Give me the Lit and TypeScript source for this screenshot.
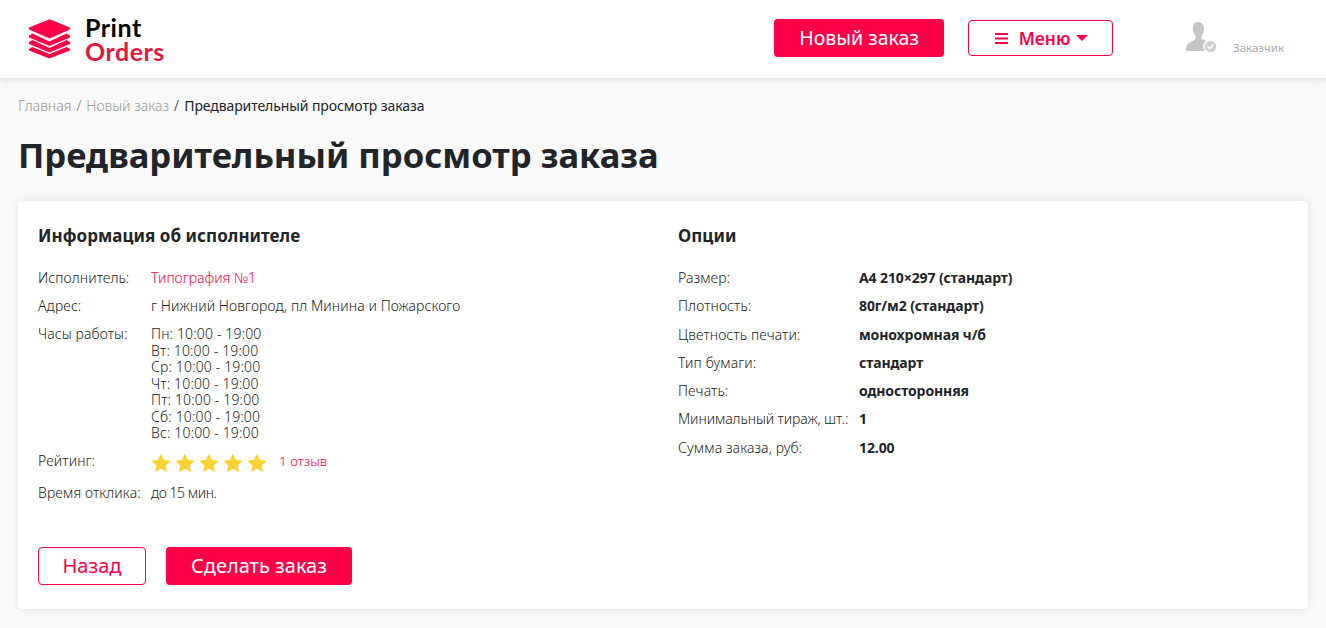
import { LitElement, html, css, svg } from "lit";
import { customElement } from "lit/decorators.js";

const hours = ["Пн: 10:00 - 19:00","Вт: 10:00 - 19:00","Ср: 10:00 - 19:00","Чт: 10:00 - 19:00","Пт: 10:00 - 19:00","Сб: 10:00 - 19:00","Вс: 10:00 - 19:00"];
const options = [["Размер:","А4 210×297 (стандарт)"],["Плотность:","80г/м2 (стандарт)"],["Цветность печати:","монохромная ч/б"],["Тип бумаги:","стандарт"],["Печать:","односторонняя"],["Минимальный тираж, шт.:","1"],["Сумма заказа, руб:","12.00"]];
const star = svg`<svg class="star" viewBox="0 0 20 20" width="20" height="20"><path d="M10 .6l2.9 6.3 6.8.8-5 4.7 1.3 6.8-6-3.4-6 3.4 1.3-6.8-5-4.7 6.8-.8z"/></svg>`;

@customElement("app-root")
export class AppRoot extends LitElement {
  static styles = css`
    :host { display: block; height: 628px; overflow: hidden; background: #f9f9f9; color: #212529; font-family: "Noto Sans", "Open Sans", sans-serif; font-size: 14px; }
    * { box-sizing: border-box; }
    header { height: 78px; background: #fff; box-shadow: 0 1px 8px rgba(0,0,0,.14); display: flex; align-items: center; padding: 0 42px 0 29px; position: relative; }
    .logo { display: flex; align-items: center; gap: 14px; }
    .logo svg { display: block; }
    .brand { font-family: Lato, sans-serif; font-size: 25px; font-weight: 700; line-height: 24px; color: #000; letter-spacing: .5px; }
    .brand div + div { color: #e3173e; }
    .spacer { flex: 1; }
    .btn { display: flex; align-items: center; justify-content: center; border-radius: 4px; font-family: "Noto Sans", sans-serif; }
    .solid { background: #ff0048; color: #fff; }
    .outline { background: #fff; color: #ff0048; border: 1px solid #ff0048; }
    .new { width: 170px; height: 38px; font-size: 19.5px; margin: -2px 24px 0 0; padding-bottom: 2px; }
    .menu { width: 145px; height: 36px; font-size: 17.4px; font-weight: 600; gap: 6px; margin: -2px 73px 0 0; padding-left: 2px; }
    .menu .bars { margin-right: 5px; }
    .caret { width: 0; height: 0; border: 6px solid transparent; border-top-color: #ff0048; border-bottom: 0; }
    .user { display: flex; gap: 15px; align-items: flex-end; height: 36px; margin-top: -4px; }
    .user svg { margin-bottom: 2px; }
    .user span { font-size: 11.5px; color: #a9a9b2; line-height: 14px; }
    main { padding: 18px 18px 0; }
    .crumbs { font-size: 14px; line-height: 20px; color: #212529; height: 20px; letter-spacing: -.1px; }
    .crumbs a { color: #999; font-weight: 300; letter-spacing: .02px; }
    .crumbs i { font-style: normal; font-weight: 300; color: #777; margin: 0 1.5px; }
    .crumbs i.dark { color: #212529; margin-right: 2px; }
    h1 { margin: 18px 0 25px; font-size: 34.57px; line-height: 42px; font-weight: 700; color: #212529; }
    .card { height: 408px; background: #fff; border-radius: 4px; box-shadow: 0 0 8px rgba(0,0,0,.1); padding: 24px 20px; display: flex; flex-direction: column; }
    .cols { display: grid; grid-template-columns: 640px 1fr; flex: 1; }
    h2 { margin: 0 0 21px; font-size: 17px; line-height: 22px; font-weight: 700; color: #212529; letter-spacing: .05px; }
    .rows { display: flex; flex-direction: column; gap: 8px; font-size: 14px; line-height: 20px; letter-spacing: .09px; font-weight: 300; color: #222; }
    .row { display: grid; grid-template-columns: 113px 1fr; }
    .opts .row { grid-template-columns: 181px 1fr; }
    .opts { gap: 8.3px; }
    .opts b { font-weight: 700; letter-spacing: -.1px; color: #212529; }
    .opts .lab { letter-spacing: .1px; }
    .opts .row.long .lab { letter-spacing: -.09px; }
    .red { color: #ff0048; letter-spacing: 0; }
    .hrs div { line-height: 16.5px; letter-spacing: .15px; }
    .hrs { padding-top: 2px; }
    .tight { letter-spacing: -.45px; }
    .row.rating { margin-top: 1px; }
    .rate { display: flex; align-items: center; height: 24px; }
    .star { fill: #fdd12f; display: block; margin-right: 4px; flex: none; }
    .rate span { margin: 0 0 4px 8px; font-size: 13.5px; }
    .actions { display: flex; gap: 20px; }
    .actions .btn { height: 38px; font-size: 20px; padding-bottom: 2px; }
    .back { width: 108px; }
    .go { width: 186px; }
  `;

  render() {
    return html`
      <header>
        <div class="logo">
          <svg width="42" height="40" viewBox="0 0 42 40" fill="#ff0048">
            <path d="M20.500 .3L41 8.500V10.500L20.500 19.500L0 10.500V8.500Z"/>
            <path d="M0 16.500L3.500 14.500L20.500 22.500L37.500 14.500L41 16.500V18.500L20.500 27L0 18.500Z"/>
            <path d="M0 23L3.500 21L20.500 29L37.500 21L41 23V25L20.500 33.500L0 25Z"/>
            <path d="M0 30L3.500 28L20.500 35L37.500 28L41 30V31.500L20.500 39.500L0 31.500Z"/>
          </svg>
          <div class="brand"><div>Print</div><div>Orders</div></div>
        </div>
        <div class="spacer"></div>
        <div class="btn solid new">Новый заказ</div>
        <div class="btn outline menu">
          <svg class="bars" width="13" height="11" viewBox="0 0 13 11" fill="#ff0048"><rect width="13" height="2"/><rect y="4.500" width="13" height="2"/><rect y="9" width="13" height="2"/></svg>
          Меню
          <span class="caret"></span>
        </div>
        <div class="user">
          <svg width="32" height="32" viewBox="0 0 32 32">
            <path fill="#c5c5c5" d="M12 1c4 0 6 3 6 7 0 3-1 5-2.500 7v3c3 1 6 2 8 3.500l-2 8.500H0c-.5-4 1-7 3-8 2.500-1.500 5-2.500 6.500-4v-3C8 13 7 11 7 8c0-4 1-7 5-7z"/>
            <circle cx="24.500" cy="25.500" r="6.500" fill="#d0d0d0" stroke="#fff" stroke-width="1.500"/>
            <path d="M21.500 25.500l2.200 2.200 3.800-4.400" fill="none" stroke="#fff" stroke-width="1.600"/>
          </svg>
          <span>Заказчик</span>
        </div>
      </header>
      <main>
        <div class="crumbs"><a>Главная</a> <i>/</i> <a>Новый заказ</a> <i class="dark">/</i> Предварительный просмотр заказа</div>
        <h1>Предварительный просмотр заказа</h1>
        <div class="card">
          <div class="cols">
            <section>
              <h2>Информация об исполнителе</h2>
              <div class="rows">
                <div class="row"><div class="lab">Исполнитель:</div><div class="red">Типография №1</div></div>
                <div class="row"><div class="lab">Адрес:</div><div>г Нижний Новгород, пл Минина и Пожарского</div></div>
                <div class="row"><div class="lab">Часы работы:</div><div class="hrs">${hours.map((h) => html`<div>${h}</div>`)}</div></div>
                <div class="row rating"><div class="lab">Рейтинг:</div><div class="rate">${star}${star}${star}${star}${star}<span class="red">1 отзыв</span></div></div>
                <div class="row"><div class="lab">Время отклика:</div><div class="tight">до 15 мин.</div></div>
              </div>
            </section>
            <section>
              <h2>Опции</h2>
              <div class="rows opts">
                ${options.map(([a, b], i) => html`<div class="row ${i === 5 ? "long" : ""}"><div class="lab">${a}</div><b>${b}</b></div>`)}
              </div>
            </section>
          </div>
          <div class="actions">
            <div class="btn outline back">Назад</div>
            <div class="btn solid go">Сделать заказ</div>
          </div>
        </div>
      </main>
    `;
  }
}
